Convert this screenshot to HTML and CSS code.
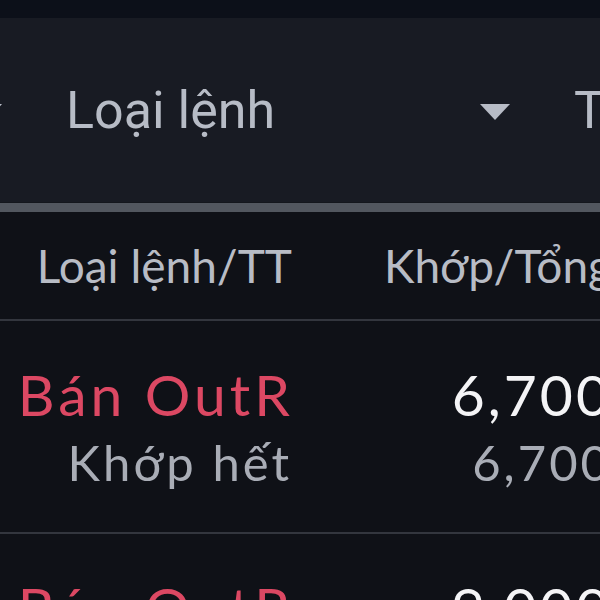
FILE: index.html
```html
<!DOCTYPE html>
<html lang="vi">
<head>
  <meta charset="UTF-8">
  <title>Sổ lệnh</title>
  <link rel="stylesheet" href="styles.css">
</head>
<body>

<div class="status-bar"></div>

<div class="filters">
  <div class="select select-first">
    <span class="select-label">Mã CK</span>
    <span class="caret"></span>
  </div>
  <div class="select">
    <span class="select-label">Loại lệnh</span>
    <span class="caret"></span>
  </div>
  <div class="select">
    <span class="select-label">Trạng thái</span>
    <span class="caret"></span>
  </div>
</div>

<div class="filters-bottom"></div>

<div class="orders">
  <div class="order-row order-head">
    <div class="col-type">Loại lệnh/TT</div>
    <div class="col-qty">Khớp/Tổng</div>
  </div>

  <div class="order-row">
    <div class="col-type">
      <div class="side sell">Bán OutR</div>
      <div class="state">Khớp hết</div>
    </div>
    <div class="col-qty">
      <div class="qty">6,700</div>
      <div class="qty-total">6,700</div>
    </div>
  </div>

  <div class="order-row">
    <div class="col-type">
      <div class="side sell">Bán OutR</div>
      <div class="state">Khớp hết</div>
    </div>
    <div class="col-qty">
      <div class="qty">9,000</div>
      <div class="qty-total">9,000</div>
    </div>
  </div>
</div>

</body>
</html>
```

FILE: styles.css
```css
body {
  margin: 0;
  width: 600px;
  height: 600px;
  overflow: hidden;
  background-color: #0f1117;
  font-family: Lato, "Noto Sans", sans-serif;
}
.status-bar {
  height: 18px;
  background-color: #0c1019;
}
.filters {
  height: 184px;
  background-color: #181b23;
  display: flex;
  align-items: center;
  margin-left: -442px;
  gap: 40px;
  white-space: nowrap;
  font-family: Roboto, sans-serif;
  font-size: 52px;
  color: #b7bcc6;
}
.select {
  width: 468px;
  flex-shrink: 0;
  display: flex;
  align-items: center;
  justify-content: space-between;
}
.caret {
  width: 0;
  height: 0;
  border-left: 15px solid transparent;
  border-right: 15px solid transparent;
  border-top: 16px solid #b7bcc6;
  margin-right: 24px;
  margin-top: 4px;
}
.filters-bottom {
  height: 9px;
  background-color: #52575f;
  border-top: 1px solid #14171d;
}
.orders {
  width: 660px;
}
.order-row {
  display: flex;
  align-items: center;
  border-bottom: 2px solid #33363e;
  height: 211px;
  white-space: nowrap;
}
.order-head {
  height: 107px;
  font-size: 46px;
  color: #b8bcc5;
}
.col-type {
  width: 292px;
  text-align: right;
}
.col-qty {
  width: 320px;
  text-align: right;
}
.side {
  font-size: 57px;
  line-height: 66px;
  letter-spacing: 4px;
  margin-right: -2px;
}
.sell {
  color: #dc4863;
}
.state {
  font-size: 49px;
  line-height: 62px;
  padding-top: 4px;
  letter-spacing: 3px;
  color: #a9adb6;
}
.qty {
  font-size: 57px;
  line-height: 66px;
  letter-spacing: 3px;
  color: #f4f4f6;
}
.qty-total {
  font-size: 49px;
  line-height: 62px;
  padding-top: 4px;
  letter-spacing: 3px;
  color: #a9adb6;
}
```
